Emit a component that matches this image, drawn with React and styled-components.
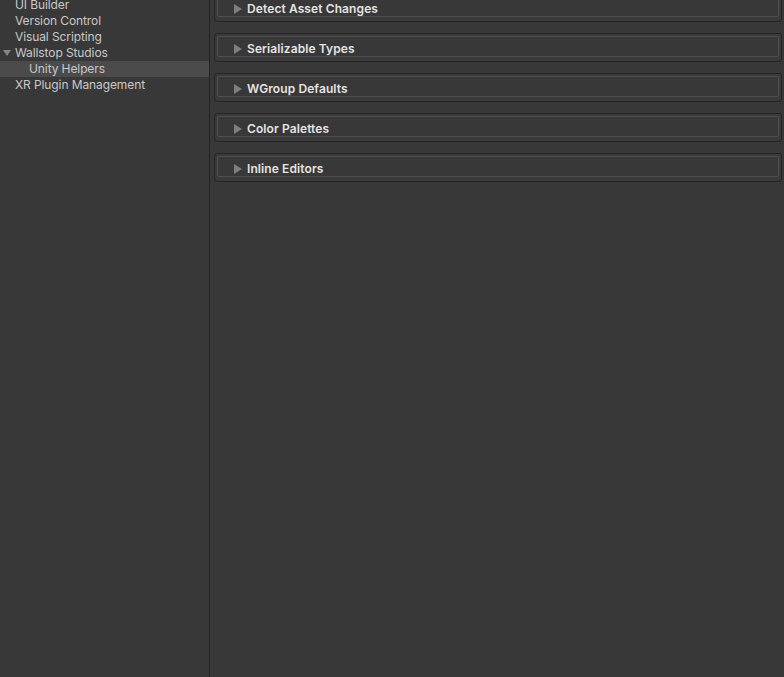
import React from 'react';
import styled, { createGlobalStyle } from 'styled-components';

const GlobalStyle = createGlobalStyle`
  html, body {
    margin: 0;
    padding: 0;
    height: 100%;
    overflow: hidden;
    background: #383838;
  }
  #root {
    height: 100%;
  }
`;

const Layout = styled.div`
  display: flex;
  height: 100vh;
  background: #383838;
  font-family: Inter, "Noto Sans", sans-serif;
  font-size: 12px;
`;

const Sidebar = styled.nav`
  width: 209px;
  flex-shrink: 0;
  border-right: 1px solid #232323;
  overflow: hidden;
`;

const TreeList = styled.ul`
  list-style: none;
  margin: -3px 0 0;
  padding: 0;
`;

const TreeRow = styled.li`
  display: flex;
  align-items: center;
  height: 16px;
  box-sizing: border-box;
  padding-bottom: 2px;
  padding-left: ${(p) => p.$depth * 14}px;
  background: ${(p) => (p.$selected ? '#4b4b4b' : 'transparent')};
  color: #c8c8c8;
  letter-spacing: -0.1px;
  white-space: nowrap;
`;

const ArrowSlot = styled.span`
  display: flex;
  align-items: center;
  width: 15px;
  padding-left: 3px;
  padding-top: 2px;
  box-sizing: border-box;
  flex-shrink: 0;
`;

const Main = styled.main`
  flex: 1;
  padding: 0 2px 0 4px;
  overflow: hidden;
`;

const Groups = styled.div`
  display: flex;
  flex-direction: column;
  gap: 11px;
  margin-top: -7px;
`;

const Group = styled.section`
  border: 1px solid #242424;
  border-radius: 3px;
  padding: 2px 2px 4px 2px;
  background: #3a3a3a;
`;

const Header = styled.div`
  display: flex;
  align-items: center;
  gap: 5px;
  height: 19px;
  box-sizing: content-box;
  padding-left: 16px;
  border: 1px solid #505050;
  border-radius: 2px;
  background: #383838;
  color: #e4e4e4;
  font-weight: 600;
  letter-spacing: 0.1px;
  cursor: pointer;
`;

const HeaderInner = styled.span`
  display: flex;
  align-items: center;
  gap: 5px;
  padding-top: 4px;
`;

const ExpandedArrow = () => (
  <svg width="8" height="6" viewBox="0 0 8 6">
    <path d="M0 0 H8 L4 6 Z" fill="#858585" />
  </svg>
);

const CollapsedArrow = () => (
  <svg width="8" height="10" viewBox="0 0 8 10">
    <path d="M0 0 L8 5 L0 10 Z" fill="#7e7e7e" />
  </svg>
);

const tree = [
  { label: 'UI Builder', depth: 0 },
  { label: 'Version Control', depth: 0 },
  { label: 'Visual Scripting', depth: 0 },
  { label: 'Wallstop Studios', depth: 0, expanded: true },
  { label: 'Unity Helpers', depth: 1, selected: true },
  { label: 'XR Plugin Management', depth: 0 },
];

const groups = [
  'Detect Asset Changes',
  'Serializable Types',
  'WGroup Defaults',
  'Color Palettes',
  'Inline Editors',
];

export default function App() {
  return (
    <>
      <GlobalStyle />
      <Layout>
        <Sidebar>
          <TreeList>
            {tree.map((item) => (
              <TreeRow key={item.label} $depth={item.depth} $selected={item.selected}>
                <ArrowSlot>{item.expanded && <ExpandedArrow />}</ArrowSlot>
                {item.label}
              </TreeRow>
            ))}
          </TreeList>
        </Sidebar>
        <Main>
          <Groups>
            {groups.map((title) => (
              <Group key={title}>
                <Header>
                  <HeaderInner>
                    <CollapsedArrow />
                    {title}
                  </HeaderInner>
                </Header>
              </Group>
            ))}
          </Groups>
        </Main>
      </Layout>
    </>
  );
}
